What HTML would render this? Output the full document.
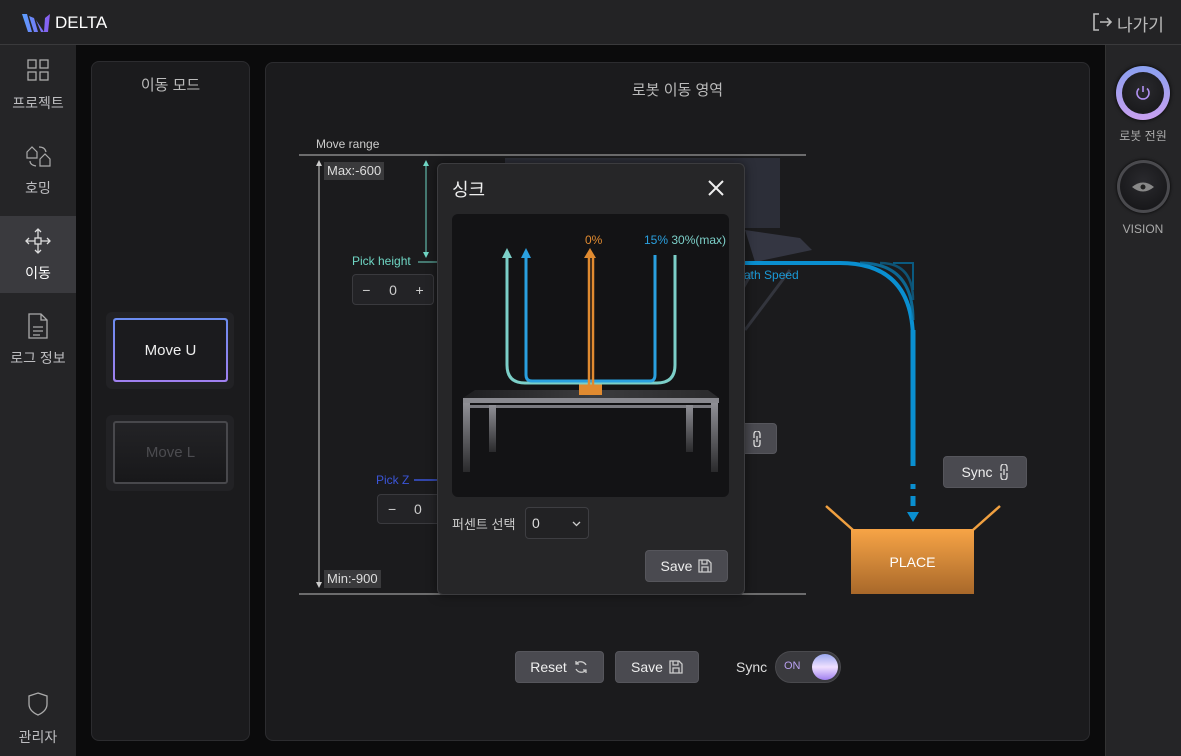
<!DOCTYPE html>
<html><head><meta charset="utf-8"><style>
*{margin:0;padding:0;box-sizing:border-box}
body{width:1181px;height:756px;background:#0b0b0c;font-family:"Liberation Sans","Noto Sans CJK KR",sans-serif;color:#ddd;position:relative;overflow:hidden}
.abs{position:absolute}
.top{left:0;top:0;width:1181px;height:45px;background:#232325;border-bottom:1px solid #3a3a3c}
.side{left:0;top:45px;width:76px;height:711px;background:#252527}
.rside{left:1105px;top:45px;width:76px;height:711px;background:#252527}
.nav{position:absolute;left:0;width:76px;text-align:center;font-size:14px;color:#bdbdc0}
.panel{background:#1b1b1d;border:1px solid #2c2c2f;border-radius:8px}
.btn{position:absolute;background:#4a4a50;border:1px solid #56565c;border-radius:4px;color:#eee;font-size:14px;display:flex;align-items:center;justify-content:center;gap:6px}
.tag{position:absolute;background:#3a3a3c;color:#ddd;font-size:13px;padding:0 3px;height:18px;line-height:18px}
</style></head><body>
<div class="abs top"></div>
<svg class="abs" style="left:22px;top:14px" width="30" height="18" viewBox="0 0 30 18"><defs><linearGradient id="lg" x1="0" x2="1"><stop offset="0" stop-color="#5aa0ff"/><stop offset="1" stop-color="#8a5cf0"/></linearGradient></defs><path d="M0 0 L6 18 L10 18 L5 0Z M7 2 L12 18 L16 18 L12 4Z M14 6 L19 18 L22 18 L23 4 L28 0 L26 18 L22 18" fill="url(#lg)"/></svg>
<div class="abs" style="left:55px;top:13px;font-size:17px;color:#fff">DELTA</div>
<svg class="abs" style="left:1092px;top:12px" width="22" height="20" viewBox="0 0 22 20" fill="none" stroke="#bbb" stroke-width="1.6"><path d="M7 2H2V18H7M8 10H19M15 6L19 10L15 14"/></svg>
<div class="abs" style="left:1117px;top:11px;font-size:17px;color:#bbb">나가기</div>

<div class="abs side"></div>
<div class="abs" style="left:0;top:216px;width:76px;height:77px;background:#3a3a3e"></div>
<svg class="abs" style="left:27px;top:59px" width="22" height="22" fill="none" stroke="#aaa" stroke-width="1.3"><rect x="1" y="1" width="8" height="8"/><rect x="13" y="1" width="8" height="8"/><rect x="1" y="13" width="8" height="8"/><rect x="13" y="13" width="8" height="8"/></svg>
<div class="nav" style="top:93px">프로젝트</div>
<svg class="abs" style="left:25px;top:143px" width="26" height="26" fill="none" stroke="#aaa" stroke-width="1.2"><path d="M2 9L7 4L12 9V15H2Z M15 16L20 11L25 16V23H15Z M14 4Q20 4 21 9 M5 18Q5 22 11 23"/></svg>
<div class="nav" style="top:178px">호밍</div>
<svg class="abs" style="left:25px;top:228px" width="26" height="26" fill="none" stroke="#ddd" stroke-width="1.3"><path d="M13 1V25M1 13H25M10 4L13 1L16 4M10 22L13 25L16 22M4 10L1 13L4 16M22 10L25 13L22 16"/><rect x="10" y="10" width="6" height="6" fill="#3a3a3e"/></svg>
<div class="nav" style="top:263px;color:#fff">이동</div>
<svg class="abs" style="left:28px;top:313px" width="20" height="26" fill="none" stroke="#aaa" stroke-width="1.3"><path d="M1 1H13L19 7V25H1Z M13 1V7H19 M5 14H15M5 18H15M5 22H12"/></svg>
<div class="nav" style="top:348px">로그 정보</div>
<svg class="abs" style="left:28px;top:692px" width="20" height="24" fill="none" stroke="#aaa" stroke-width="1.3"><path d="M10 1L19 4V12Q19 19 10 23Q1 19 1 12V4Z"/></svg>
<div class="nav" style="top:727px">관리자</div>

<div class="abs rside" style="border-left:1px solid #333"></div>
<div class="abs" style="left:1116px;top:66px;width:54px;height:54px;border-radius:50%;background:linear-gradient(180deg,#8aa0f0,#c8a0f0);box-shadow:0 0 4px #000"></div>
<div class="abs" style="left:1122px;top:72px;width:42px;height:42px;border-radius:50%;background:radial-gradient(circle at 50% 40%,#2a2a2e,#151517)"></div>
<svg class="abs" style="left:1134px;top:84px" width="18" height="18" fill="none" stroke="#b090f0" stroke-width="1.6"><path d="M9 2V8M5 4.5A6 6 0 1 0 13 4.5"/></svg>
<div class="abs" style="left:1105px;top:127px;width:76px;text-align:center;font-size:12px;color:#aaa">로봇 전원</div>
<div class="abs" style="left:1117px;top:160px;width:53px;height:53px;border-radius:50%;background:#4a4a4e;box-shadow:0 0 3px #000"></div>
<div class="abs" style="left:1120px;top:163px;width:47px;height:47px;border-radius:50%;background:radial-gradient(circle at 50% 40%,#2a2a2e,#121214)"></div>
<svg class="abs" style="left:1131px;top:181px" width="24" height="12"><path d="M1 6Q12 -3 23 6Q12 15 1 6Z" fill="#888"/><circle cx="12" cy="6" r="2.5" fill="#222"/></svg>
<div class="abs" style="left:1105px;top:222px;width:76px;text-align:center;font-size:12px;color:#aaa">VISION</div>

<div class="abs panel" style="left:91px;top:61px;width:159px;height:680px"></div>
<div class="abs" style="left:91px;top:74px;width:159px;text-align:center;font-size:15px;color:#bbb">이동 모드</div>
<div class="abs" style="left:106px;top:312px;width:128px;height:77px;background:#222225;border-radius:6px"></div>
<div class="abs" style="left:113px;top:318px;width:115px;height:64px;border-radius:3px;background:linear-gradient(180deg,#6b8cf0,#a080f0);padding:2px"><div style="width:100%;height:100%;background:#1b1b1e;border-radius:2px;display:flex;align-items:center;justify-content:center;font-size:15px;color:#eee">Move U</div></div>
<div class="abs" style="left:106px;top:415px;width:128px;height:76px;background:#222225;border-radius:6px"></div>
<div class="abs" style="left:113px;top:421px;width:115px;height:63px;border-radius:3px;border:2px solid #48484c;background:linear-gradient(#232326,#18181a);display:flex;align-items:center;justify-content:center;font-size:15px;color:#4c4c50">Move L</div>

<div class="abs panel" style="left:265px;top:62px;width:825px;height:679px"></div>
<div class="abs" style="left:265px;top:79px;width:825px;text-align:center;font-size:15px;color:#bbb">로봇 이동 영역</div>

<svg class="abs" style="left:0;top:0" width="1181" height="756">
<rect x="505" y="158" width="275" height="70" fill="#2c2e38"/>
<path d="M745 230L800 238L812 250L755 262Z" fill="#343642"/>
<path d="M752 272L742 290M790 270L745 330" stroke="#33353d" stroke-width="3"/>
<line x1="299" y1="155" x2="806" y2="155" stroke="#888" stroke-width="1.5"/>
<line x1="299" y1="594" x2="806" y2="594" stroke="#888" stroke-width="1.5"/>
<line x1="319" y1="162" x2="319" y2="586" stroke="#ccc" stroke-width="1"/>
<path d="M316 166L319 160L322 166Z M316 582L319 588L322 582Z" fill="#ccc"/>
<line x1="426" y1="162" x2="426" y2="256" stroke="#6fd6c4" stroke-width="1"/>
<path d="M423 166L426 160L429 166Z M423 252L426 258L429 252Z" fill="#6fd6c4"/>
<line x1="418" y1="262" x2="440" y2="262" stroke="#6fd6c4"/>
<line x1="414" y1="480" x2="440" y2="480" stroke="#3b55d8" stroke-width="1.5"/>
<path d="M740 263H840" stroke="#0a8fd0" stroke-width="4"/>
<path d="M840 263Q913 263 913 340" stroke="#0a8fd0" stroke-width="4" fill="none"/>
<path d="M860 263Q913 263 913 320" stroke="#0a7ab0" stroke-width="3" fill="none" opacity=".8"/>
<path d="M880 263Q913 263 913 300" stroke="#0a6a98" stroke-width="2.5" fill="none" opacity=".7"/>
<path d="M893 263H913V290" stroke="#0a5a80" stroke-width="2" fill="none"/>
<path d="M913 330V466" stroke="#0a8fd0" stroke-width="5"/>
<path d="M913 484V489M913 496V506" stroke="#0a8fd0" stroke-width="5"/>
<path d="M907 512H919L913 522Z" fill="#0a8fd0"/>
<path d="M826 506L853 530M1000 506L973 530" stroke="#f0a040" stroke-width="2.5"/>
<defs><linearGradient id="og" x1="0" y1="0" x2="0" y2="1"><stop offset="0" stop-color="#f7a446"/><stop offset="1" stop-color="#a8682a"/></linearGradient></defs>
<rect x="851" y="529" width="123" height="65" fill="url(#og)"/>
</svg>
<div class="abs" style="left:744px;top:268px;font-size:12px;color:#1a9ad8">ath Speed</div>
<div class="abs" style="left:851px;top:554px;width:123px;text-align:center;font-size:14px;color:#fff">PLACE</div>
<div class="abs" style="left:316px;top:137px;font-size:12px;color:#ccc">Move range</div>
<div class="tag" style="left:324px;top:162px">Max:-600</div>
<div class="tag" style="left:324px;top:570px">Min:-900</div>
<div class="abs" style="left:352px;top:254px;font-size:12px;color:#6fd6c4">Pick height</div>
<div class="abs" style="left:352px;top:274px;width:82px;height:31px;border:1px solid #3a3a3e;border-radius:4px;background:#232326;font-size:14px;color:#ccc;display:flex;justify-content:space-around;align-items:center"><span>−</span><span>0</span><span>+</span></div>
<div class="abs" style="left:376px;top:473px;font-size:12px;color:#3b55d8">Pick Z</div>
<div class="abs" style="left:377px;top:494px;width:65px;height:30px;border:1px solid #3a3a3e;border-radius:4px;background:#232326;font-size:14px;color:#ccc"><span style="position:absolute;left:10px;top:6px">−</span><span style="position:absolute;left:36px;top:6px">0</span></div>
<div class="btn" style="left:735px;top:423px;width:42px;height:31px;justify-content:flex-end;padding-right:14px"><svg width="10" height="16" fill="none" stroke="#ddd" stroke-width="1.3"><path d="M2 7V3A3 3 0 0 1 8 3V7M2 9V13A3 3 0 0 0 8 13V9M5 5V11"/></svg></div>
<div class="btn" style="left:943px;top:456px;width:84px;height:32px">Sync <svg width="10" height="16" fill="none" stroke="#ddd" stroke-width="1.3"><path d="M2 7V3A3 3 0 0 1 8 3V7M2 9V13A3 3 0 0 0 8 13V9M5 5V11"/></svg></div>

<div class="btn" style="left:515px;top:651px;width:89px;height:32px">Reset <svg width="16" height="16" fill="none" stroke="#ccc" stroke-width="1.3"><path d="M13 6A6 6 0 0 0 3 5M3 2V5H6M3 10A6 6 0 0 0 13 11M13 14V11H10"/></svg></div>
<div class="btn" style="left:615px;top:651px;width:84px;height:32px">Save <svg width="14" height="14" fill="none" stroke="#ccc" stroke-width="1.3"><path d="M1 1H10L13 4V13H1Z M4 1V5H9V1 M4 13V8H10V13"/></svg></div>
<div class="abs" style="left:736px;top:659px;font-size:14px;color:#ddd">Sync</div>
<div class="abs" style="left:775px;top:651px;width:66px;height:32px;border-radius:16px;background:#3a3a3e;border:1px solid #4a4a4e"></div>
<div class="abs" style="left:784px;top:660px;font-size:11px;color:#b9a0f0">ON</div>
<div class="abs" style="left:812px;top:654px;width:26px;height:26px;border-radius:50%;background:linear-gradient(180deg,#9aa8f0,#f0e0ff 50%,#a080f0)"></div>

<!-- modal -->
<div class="abs" style="left:437px;top:163px;width:308px;height:432px;background:#262628;border:1px solid #3c3c3f;border-radius:6px;box-shadow:0 0 10px rgba(0,0,0,.5)"></div>
<div class="abs" style="left:452px;top:176px;font-size:18px;color:#eee">싱크</div>
<svg class="abs" style="left:707px;top:179px" width="18" height="18" stroke="#eee" stroke-width="2"><path d="M2 2L16 16M16 2L2 16"/></svg>
<div class="abs" style="left:452px;top:214px;width:277px;height:283px;background:#131315;border-radius:6px"></div>
<svg class="abs" style="left:0;top:0" width="1181" height="756">
<defs><linearGradient id="tg" x1="0" y1="0" x2="0" y2="1"><stop offset="0" stop-color="#909096"/><stop offset="1" stop-color="#2a2a2c"/></linearGradient>
<linearGradient id="sg" x1="0" x2="1"><stop offset="0" stop-color="#1e1e20"/><stop offset=".5" stop-color="#3c3c3e"/><stop offset="1" stop-color="#2a2a2c"/></linearGradient></defs>
<path d="M475 390H708L719 398H463Z" fill="url(#sg)"/>
<rect x="463" y="398" width="256" height="5" fill="#8a8a90"/>
<rect x="463" y="403" width="7" height="69" fill="url(#tg)"/>
<rect x="711" y="403" width="7" height="69" fill="url(#tg)"/>
<rect x="470" y="405" width="241" height="3" fill="#7a7a80"/>
<rect x="489" y="405" width="7" height="47" fill="url(#tg)"/>
<rect x="686" y="405" width="7" height="47" fill="url(#tg)"/>
<rect x="579" y="384" width="23" height="11" fill="#e08a30"/>
<path d="M507 257V365Q507 383 525 383H657Q675 383 675 365V255" stroke="#7ccfc8" stroke-width="3" fill="none"/>
<path d="M526 257V375Q526 381 532 381H650Q655 381 655 375V255" stroke="#2aa0e0" stroke-width="3" fill="none"/>
<path d="M502 258L507 248L512 258Z" fill="#7ccfc8"/>
<path d="M521 258L526 248L531 258Z" fill="#2aa0e0"/>
<path d="M589 386V256M593 386V256" stroke="#e08a30" stroke-width="2.5"/>
<path d="M584 258L590 248L596 258Z" fill="#e08a30"/>
</svg>
<div class="abs" style="left:585px;top:233px;font-size:12px;color:#e08a30">0%</div>
<div class="abs" style="left:644px;top:233px;font-size:12px;color:#2aa0e0">15% <span style="color:#7ccfc8">30%(max)</span></div>
<div class="abs" style="left:452px;top:514px;font-size:13px;color:#ccc">퍼센트 선택</div>
<div class="abs" style="left:525px;top:507px;width:64px;height:32px;border:1px solid #3e3e42;border-radius:4px;background:#222224;font-size:14px;color:#ddd;padding:7px 0 0 6px">0<svg style="position:absolute;right:7px;top:13px" width="9" height="6" fill="none" stroke="#ccc" stroke-width="1.3"><path d="M1 1L4.5 4.5L8 1"/></svg></div>
<div class="btn" style="left:645px;top:550px;width:83px;height:32px">Save <svg width="14" height="14" fill="none" stroke="#ccc" stroke-width="1.3"><path d="M1 1H10L13 4V13H1Z M4 1V5H9V1 M4 13V8H10V13"/></svg></div>
</body></html>
